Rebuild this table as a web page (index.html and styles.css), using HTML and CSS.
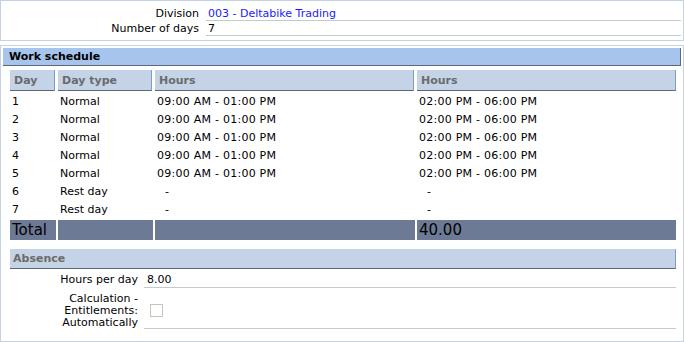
FILE: index.html
```html
<!DOCTYPE html>
<html>
<head>
<meta charset="utf-8">
<link rel="stylesheet" href="styles.css">
</head>
<body>
<div class="panel top-panel">
  <div class="field first">
    <div class="label">Division</div>
    <div class="value link">003 - Deltabike Trading</div>
  </div>
  <div class="field">
    <div class="label">Number of days</div>
    <div class="value">7</div>
  </div>
</div>

<div class="panel main-panel">
  <div class="section-bar">Work schedule</div>

  <div class="schedule">
    <div class="row head">
      <div class="hcell">Day</div>
      <div class="hcell">Day type</div>
      <div class="hcell">Hours</div>
      <div class="hcell">Hours</div>
    </div>
    <div class="rows">
      <div class="row data"><div>1</div><div>Normal</div><div class="time">09:00 AM - 01:00 PM</div><div class="time">02:00 PM - 06:00 PM</div></div>
      <div class="row data"><div>2</div><div>Normal</div><div class="time">09:00 AM - 01:00 PM</div><div class="time">02:00 PM - 06:00 PM</div></div>
      <div class="row data"><div>3</div><div>Normal</div><div class="time">09:00 AM - 01:00 PM</div><div class="time">02:00 PM - 06:00 PM</div></div>
      <div class="row data"><div>4</div><div>Normal</div><div class="time">09:00 AM - 01:00 PM</div><div class="time">02:00 PM - 06:00 PM</div></div>
      <div class="row data"><div>5</div><div>Normal</div><div class="time">09:00 AM - 01:00 PM</div><div class="time">02:00 PM - 06:00 PM</div></div>
      <div class="row data"><div>6</div><div>Rest day</div><div class="dash">-</div><div class="dash">-</div></div>
      <div class="row data"><div>7</div><div>Rest day</div><div class="dash">-</div><div class="dash">-</div></div>
    </div>
    <div class="row total">
      <div>Total</div><div></div><div></div><div>40.00</div>
    </div>
  </div>

  <div class="absence">
    <div class="sub-bar">Absence</div>
    <div class="afield">
      <div class="alabel">Hours per day</div>
      <div class="avalue">8.00</div>
    </div>
    <div class="afield calc">
      <div class="alabel">Calculation -<br>Entitlements:<br>Automatically</div>
      <div class="avalue"><span class="checkbox"></span></div>
    </div>
  </div>
</div>
</body>
</html>
```
FILE: styles.css
```css
html, body {
  margin: 0;
  padding: 0;
  background: #ffffff;
}
body {
  font-family: "DejaVu Sans", Verdana, sans-serif;
  font-size: 11px;
  color: #000000;
  width: 684px;
}
.panel {
  border: 1px solid #c5d2e3;
  box-sizing: border-box;
  width: 684px;
}
.top-panel {
  padding: 5px 2px 4px 1px;
}
.field {
  display: grid;
  grid-template-columns: 197px 1fr;
  column-gap: 7px;
}
.label {
  text-align: right;
  padding-top: 2px;
  line-height: 12px;
}
.value {
  padding: 2px 0 0 2px;
  line-height: 12px;
  border-bottom: 1px solid #c2cdcb;
}
.link {
  color: #1a1aff;
}
.main-panel {
  margin-top: 4px;
  padding: 2px 2px 2px 2px;
  height: 297px;
}
.section-bar {
  background: #a7c5ec;
  border-right: 1px solid #5c6778;
  border-bottom: 1px solid #5c6778;
  line-height: 17px;
  font-weight: bold;
  padding-left: 6px;
}
.schedule {
  margin: 4px 5px 0 7px;
}
.row {
  display: grid;
  grid-template-columns: 45px 94px 259px 259px;
  column-gap: 3px;
}
.hcell {
  background: #c4d3e6;
  border-right: 1px solid #7f9cc7;
  border-bottom: 1px solid #5c6778;
  color: #6b6b6b;
  font-weight: bold;
  line-height: 19px;
  padding: 1px 0 0 4px;
}
.rows {
  margin-top: 1px;
}
.data > div {
  padding: 2px 0 0 2px;
  line-height: 16px;
}
.data > .time {
  letter-spacing: 0.25px;
}
.data > .dash {
  padding-left: 10px;
}
.total {
  margin-top: 2px;
  column-gap: 2px;
  grid-template-columns: 46px 95px 260px 259px;
}
.total > div {
  background: #6d7a96;
  font-size: 15px;
  line-height: 20px;
  padding-left: 2px;
}
.absence {
  margin: 9px 5px 0 7px;
}
.sub-bar {
  background: #c4d3e6;
  border-right: 1px solid #7f9cc7;
  border-bottom: 1px solid #5c6778;
  color: #6b6b6b;
  font-weight: bold;
  line-height: 19px;
  padding-left: 3px;
}
.afield {
  display: grid;
  grid-template-columns: 128px 1fr;
  column-gap: 6px;
}
.alabel {
  text-align: right;
  padding-top: 3px;
  line-height: 15px;
}
.avalue {
  border-bottom: 1px solid #c2cdcb;
  padding: 3px 0 0 3px;
  line-height: 15px;
}
.calc .alabel {
  padding: 5px 0 0 0;
  line-height: 12px;
}
.calc .avalue {
  padding: 16px 0 0 6px;
  line-height: 11px;
}
.checkbox {
  display: block;
  width: 11px;
  height: 11px;
  border: 1px solid #c8c4ba;
  background: #ffffff;
}
```
